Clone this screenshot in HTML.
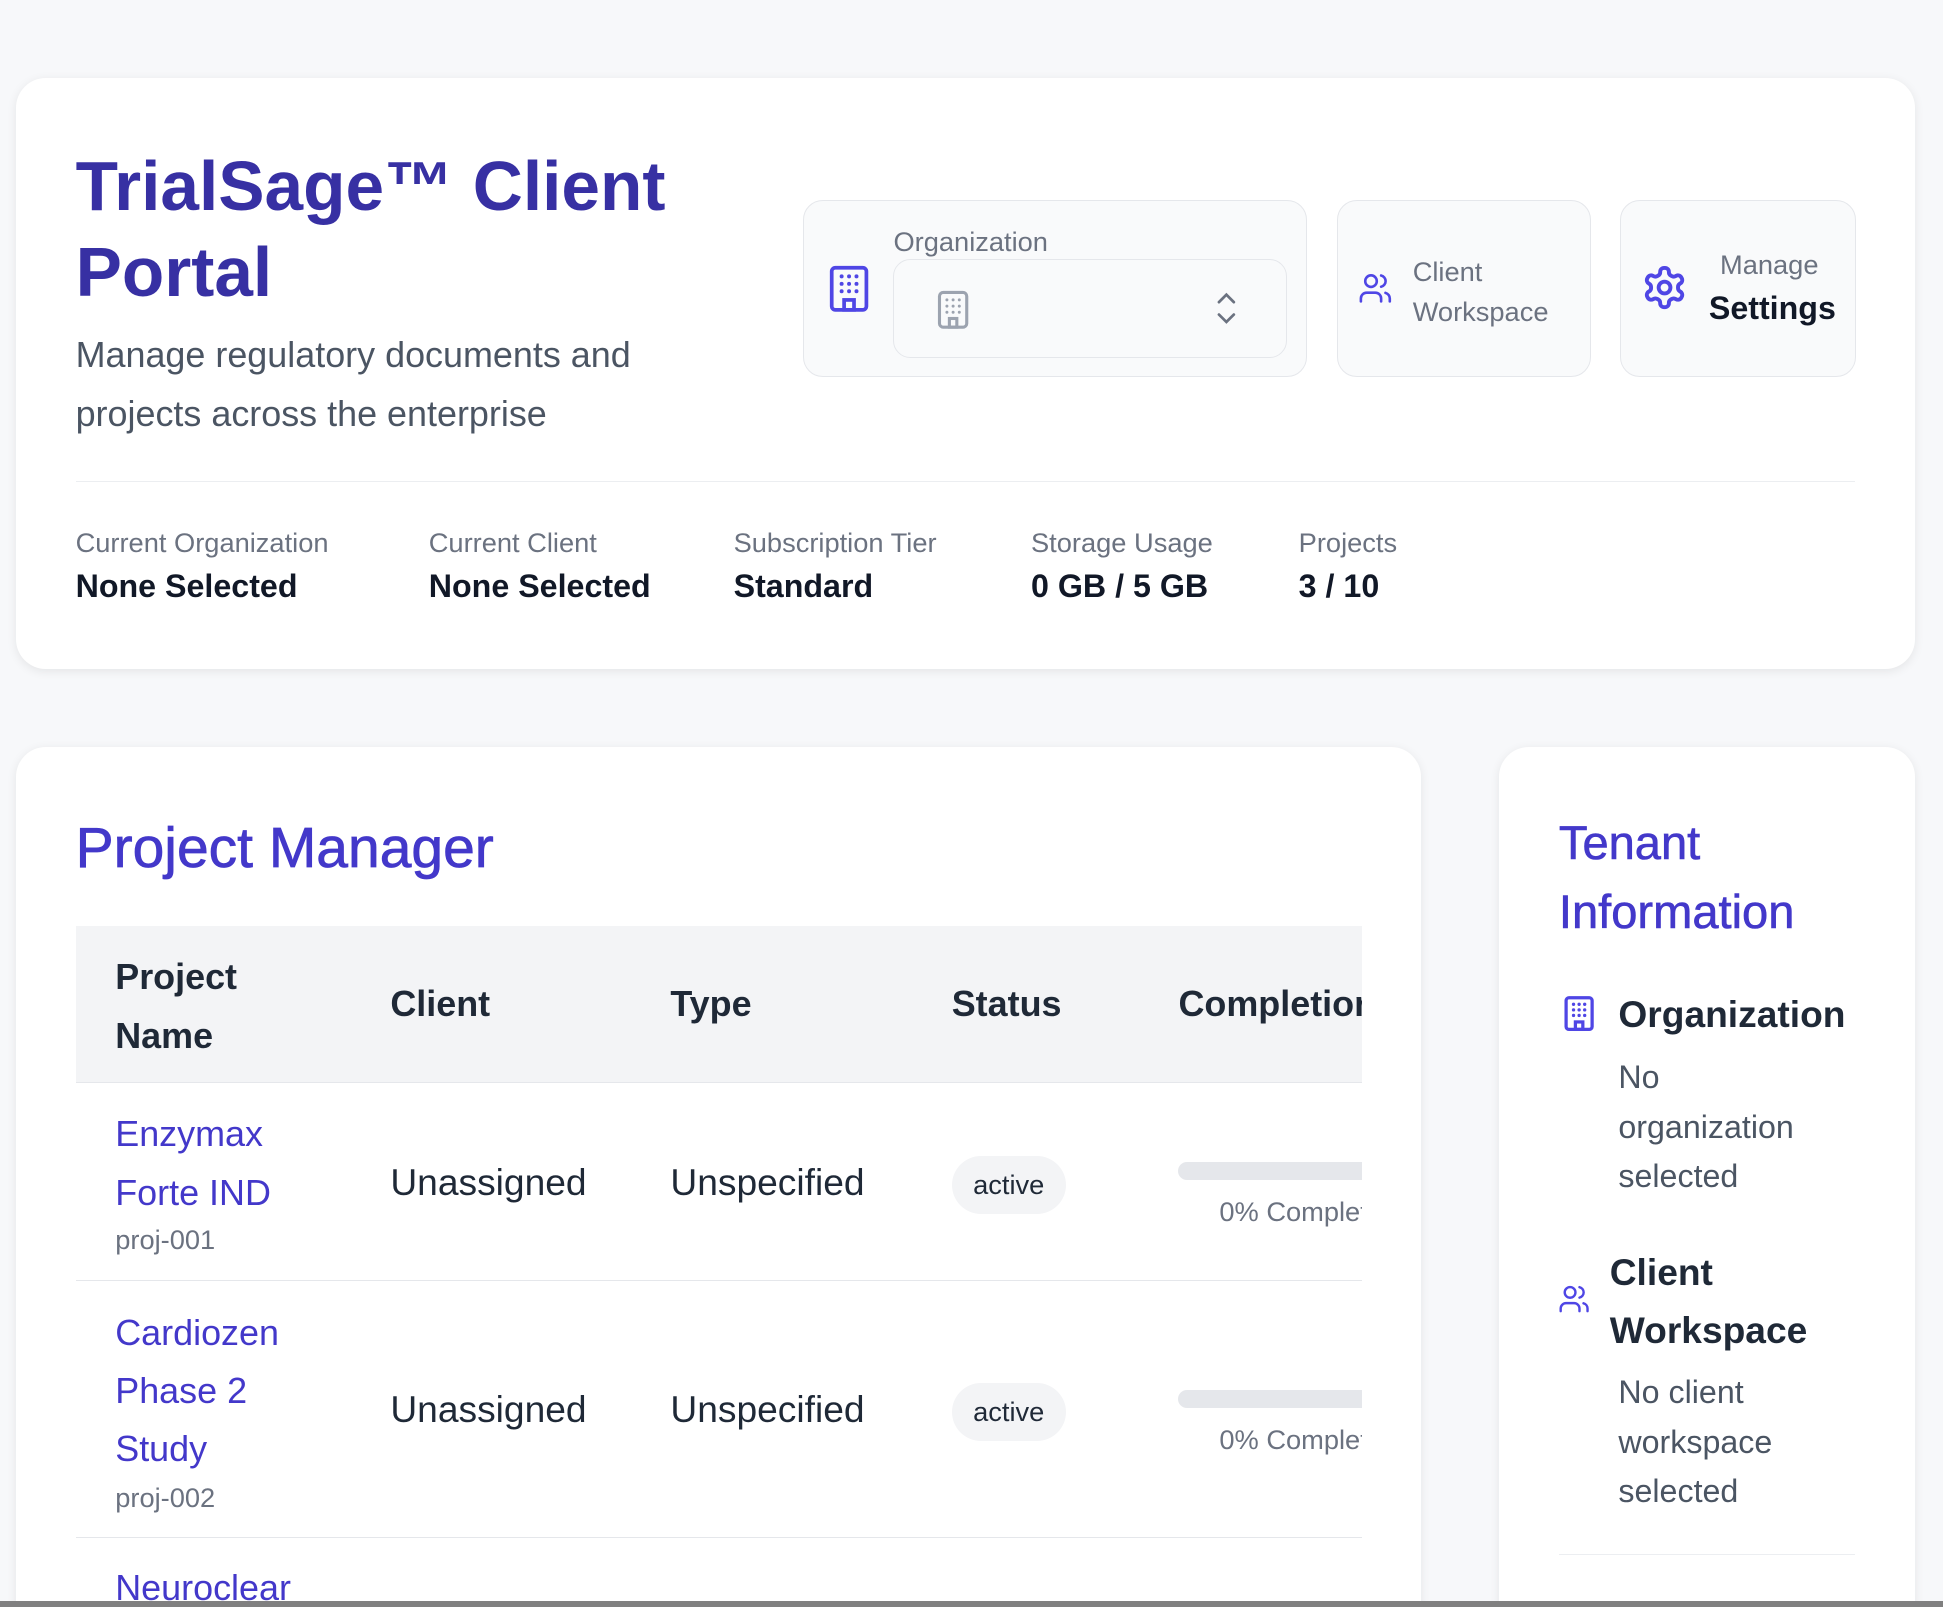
<!DOCTYPE html>
<html><head><meta charset="utf-8"><style>
html,body{margin:0;padding:0;background:#f7f8fa;width:1943px;height:1607px;overflow:hidden;font-family:"Liberation Sans",sans-serif}
#w{zoom:1.2392;position:relative;width:1568px;height:1297px}
.a{position:absolute;white-space:nowrap}
.card{position:absolute;background:#fff;border-radius:24px;box-shadow:0 2px 8px rgba(0,0,0,.08)}
.box{position:absolute;background:#f9fafb;border:1px solid #e5e7eb;border-radius:16px}
.lab{font-size:22px;color:#6b7280}
.val{font-size:26px;color:#111827;font-weight:bold}
.th{font-size:29px;font-weight:bold;color:#1f2937}
.td{font-size:30px;color:#1f2937}
.lk{font-size:29px;color:#4338ca;line-height:47px}
.badge{position:absolute;background:#f3f4f6;border-radius:24px;font-size:22px;color:#1f2937;text-align:center;line-height:46px}
.bar{position:absolute;background:#e5e7eb;border-radius:8px;height:14px}
.g{font-size:26px;color:#4b5563;line-height:40px}
</style></head><body><div id="w">
<div class="card" style="left:13px;top:63px;width:1532px;height:477px"></div>
<div class="a" style="left:61px;top:115px;font-size:56px;font-weight:bold;color:#3730a3;line-height:70px">TrialSage™ Client<br>Portal</div>
<div class="a" style="left:61px;top:262px;font-size:29px;color:#4b5563;line-height:48px">Manage regulatory documents and<br>projects across the enterprise</div>

<div class="box" style="left:648px;top:161px;width:405px;height:142px"></div>
<svg class="a" style="left:668px;top:213px" width="34" height="40" viewBox="0 0 34 40" fill="none" stroke="#4f46e5" stroke-width="3"><rect x="3" y="3" width="28" height="34" rx="3"/><g fill="#4f46e5" stroke="none"><circle cx="11" cy="10" r="1.6"/><circle cx="17" cy="10" r="1.6"/><circle cx="23" cy="10" r="1.6"/><circle cx="11" cy="16" r="1.6"/><circle cx="17" cy="16" r="1.6"/><circle cx="23" cy="16" r="1.6"/><circle cx="11" cy="22" r="1.6"/><circle cx="17" cy="22" r="1.6"/><circle cx="23" cy="22" r="1.6"/></g><rect x="13" y="29" width="8" height="8"/></svg>
<div class="a lab" style="left:721px;top:182px">Organization</div>
<div class="box" style="left:721px;top:209px;width:316px;height:78px;background:#f9fafb;border-radius:14px"></div>
<svg class="a" style="left:756px;top:234px" width="26" height="32" viewBox="0 0 26 32" fill="none" stroke="#9ca3af" stroke-width="2.5"><rect x="2" y="2" width="22" height="28" rx="3"/><g fill="#9ca3af" stroke="none"><circle cx="8" cy="8" r="1.2"/><circle cx="13" cy="8" r="1.2"/><circle cx="18" cy="8" r="1.2"/><circle cx="8" cy="13" r="1.2"/><circle cx="13" cy="13" r="1.2"/><circle cx="18" cy="13" r="1.2"/><circle cx="8" cy="18" r="1.2"/><circle cx="13" cy="18" r="1.2"/><circle cx="18" cy="18" r="1.2"/></g><rect x="10" y="23" width="6" height="7"/></svg>
<svg class="a" style="left:980px;top:235px" width="20" height="28" viewBox="0 0 20 28" fill="none" stroke="#6b7280" stroke-width="2.2" stroke-linecap="round"><path d="M4 9l6-6 6 6M4 19l6 6 6-6"/></svg>

<div class="box" style="left:1079px;top:161px;width:203px;height:142px"></div>
<svg class="a" style="left:1096px;top:219px" width="28" height="28" viewBox="0 0 24 24" fill="none" stroke="#4f46e5" stroke-width="1.8" stroke-linecap="round"><circle cx="9" cy="7" r="4"/><path d="M2 21v-2a4 4 0 0 1 4-4h6a4 4 0 0 1 4 4v2M16 3.1a4 4 0 0 1 0 7.8M22 21v-2a4 4 0 0 0-3-3.9"/></svg>
<div class="a lab" style="left:1140px;top:203px;line-height:33px">Client<br>Workspace</div>

<div class="box" style="left:1307px;top:161px;width:189px;height:142px"></div>
<svg class="a" style="left:1324px;top:213px" width="38" height="38" viewBox="0 0 24 24" fill="none" stroke="#4f46e5" stroke-width="2"><path d="M12.22 2h-.44a2 2 0 0 0-2 2v.18a2 2 0 0 1-1 1.73l-.43.25a2 2 0 0 1-2 0l-.15-.08a2 2 0 0 0-2.730.73l-.22.38a2 2 0 0 0 .73 2.73l.15.1a2 2 0 0 1 1 1.72v.51a2 2 0 0 1-1 1.74l-.15.09a2 2 0 0 0-.73 2.73l.22.38a2 2 0 0 0 2.73.73l.15-.08a2 2 0 0 1 2 0l.43.25a2 2 0 0 1 1 1.73V20a2 2 0 0 0 2 2h.44a2 2 0 0 0 2-2v-.18a2 2 0 0 1 1-1.73l.43-.25a2 2 0 0 1 2 0l.15.08a2 2 0 0 0 2.73-.73l.22-.39a2 2 0 0 0-.73-2.73l-.15-.08a2 2 0 0 1-1-1.74v-.5a2 2 0 0 1 1-1.74l.15-.09a2 2 0 0 0 .73-2.730l-.22-.38a2 2 0 0 0-2.73-.73l-.15.08a2 2 0 0 1-2 0l-.43-.25a2 2 0 0 1-1-1.73V4a2 2 0 0 0-2-2z"/><circle cx="12" cy="12" r="3"/></svg>
<div class="a lab" style="left:1388px;top:201px">Manage</div>
<div class="a" style="left:1379px;top:234px;font-size:26px;font-weight:bold;color:#111827">Settings</div>

<div class="a" style="left:61px;top:388px;width:1436px;height:1px;background:#eceef1"></div>
<div class="a lab" style="left:61px;top:425px">Current Organization</div><div class="a val" style="left:61px;top:458px">None Selected</div>
<div class="a lab" style="left:346px;top:425px">Current Client</div><div class="a val" style="left:346px;top:458px">None Selected</div>
<div class="a lab" style="left:592px;top:425px">Subscription Tier</div><div class="a val" style="left:592px;top:458px">Standard</div>
<div class="a lab" style="left:832px;top:425px">Storage Usage</div><div class="a val" style="left:832px;top:458px">0 GB / 5 GB</div>
<div class="a lab" style="left:1048px;top:425px">Projects</div><div class="a val" style="left:1048px;top:458px">3 / 10</div>

<div class="card" style="left:13px;top:603px;width:1134px;height:720px"></div>
<div class="a" style="left:61px;top:658px;font-size:46px;color:#4338ca;-webkit-text-stroke:0.6px #4338ca">Project Manager</div>
<div class="a" style="left:61px;top:747px;width:1038px;height:126px;background:#f3f4f6;border-bottom:1px solid #e5e7eb"></div>
<div class="a th" style="left:93px;top:764px;line-height:48px">Project<br>Name</div>
<div class="a th" style="left:315px;top:793px">Client</div>
<div class="a th" style="left:541px;top:793px">Type</div>
<div class="a th" style="left:768px;top:793px">Status</div>
<div class="a" style="left:951px;top:793px;width:148px;overflow:hidden"><span class="th">Completion</span></div>

<div class="a lk" style="left:93px;top:892px">Enzymax<br>Forte IND</div>
<div class="a" style="left:93px;top:988px;font-size:22px;color:#6b7280">proj-001</div>
<div class="a td" style="left:315px;top:937px">Unassigned</div>
<div class="a td" style="left:541px;top:937px">Unspecified</div>
<div class="badge" style="left:768px;top:933px;width:92px;height:47px">active</div>
<div class="bar" style="left:951px;top:938px;width:148px;border-radius:8px 0 0 8px"></div>
<div class="a" style="left:984px;top:965px;width:115px;overflow:hidden;font-size:22px;color:#6b7280">0% Complete</div>
<div class="a" style="left:61px;top:1033px;width:1038px;height:1px;background:#e5e7eb"></div>

<div class="a lk" style="left:93px;top:1052px">Cardiozen<br>Phase 2<br>Study</div>
<div class="a" style="left:93px;top:1196px;font-size:22px;color:#6b7280">proj-002</div>
<div class="a td" style="left:315px;top:1120px">Unassigned</div>
<div class="a td" style="left:541px;top:1120px">Unspecified</div>
<div class="badge" style="left:768px;top:1116px;width:92px;height:47px">active</div>
<div class="bar" style="left:951px;top:1122px;width:148px;border-radius:8px 0 0 8px"></div>
<div class="a" style="left:984px;top:1149px;width:115px;overflow:hidden;font-size:22px;color:#6b7280">0% Complete</div>
<div class="a" style="left:61px;top:1240px;width:1038px;height:1px;background:#e5e7eb"></div>
<div class="a lk" style="left:93px;top:1258px">Neuroclear</div>

<div class="card" style="left:1210px;top:603px;width:335px;height:720px"></div>
<div class="a" style="left:1258px;top:652px;font-size:38px;color:#4338ca;line-height:56px;-webkit-text-stroke:0.5px #4338ca">Tenant<br>Information</div>
<svg class="a" style="left:1261px;top:803px" width="26" height="30" viewBox="0 0 34 40" fill="none" stroke="#4f46e5" stroke-width="3.5"><rect x="3" y="3" width="28" height="34" rx="3"/><g fill="#4f46e5" stroke="none"><circle cx="11" cy="10" r="1.8"/><circle cx="17" cy="10" r="1.8"/><circle cx="23" cy="10" r="1.8"/><circle cx="11" cy="16" r="1.8"/><circle cx="17" cy="16" r="1.8"/><circle cx="23" cy="16" r="1.8"/><circle cx="11" cy="22" r="1.8"/><circle cx="17" cy="22" r="1.8"/><circle cx="23" cy="22" r="1.8"/></g><rect x="13" y="29" width="8" height="8"/></svg>
<div class="a" style="left:1306px;top:801px;font-size:30px;font-weight:bold;color:#1f2937">Organization</div>
<div class="a g" style="left:1306px;top:850px">No<br>organization<br>selected</div>
<svg class="a" style="left:1257px;top:1035px" width="26" height="26" viewBox="0 0 24 24" fill="none" stroke="#4f46e5" stroke-width="1.8" stroke-linecap="round"><circle cx="9" cy="7" r="4"/><path d="M2 21v-2a4 4 0 0 1 4-4h6a4 4 0 0 1 4 4v2M16 3.1a4 4 0 0 1 0 7.8M22 21v-2a4 4 0 0 0-3-3.9"/></svg>
<div class="a" style="left:1299px;top:1003px;font-size:30px;font-weight:bold;color:#1f2937;line-height:47px">Client<br>Workspace</div>
<div class="a g" style="left:1306px;top:1104px">No client<br>workspace<br>selected</div>
<div class="a" style="left:1258px;top:1254px;width:239px;height:1px;background:#eceef1"></div>

<div class="a" style="left:0;top:1292px;width:1568px;height:5px;background:#808080"></div>
</div></body></html>
